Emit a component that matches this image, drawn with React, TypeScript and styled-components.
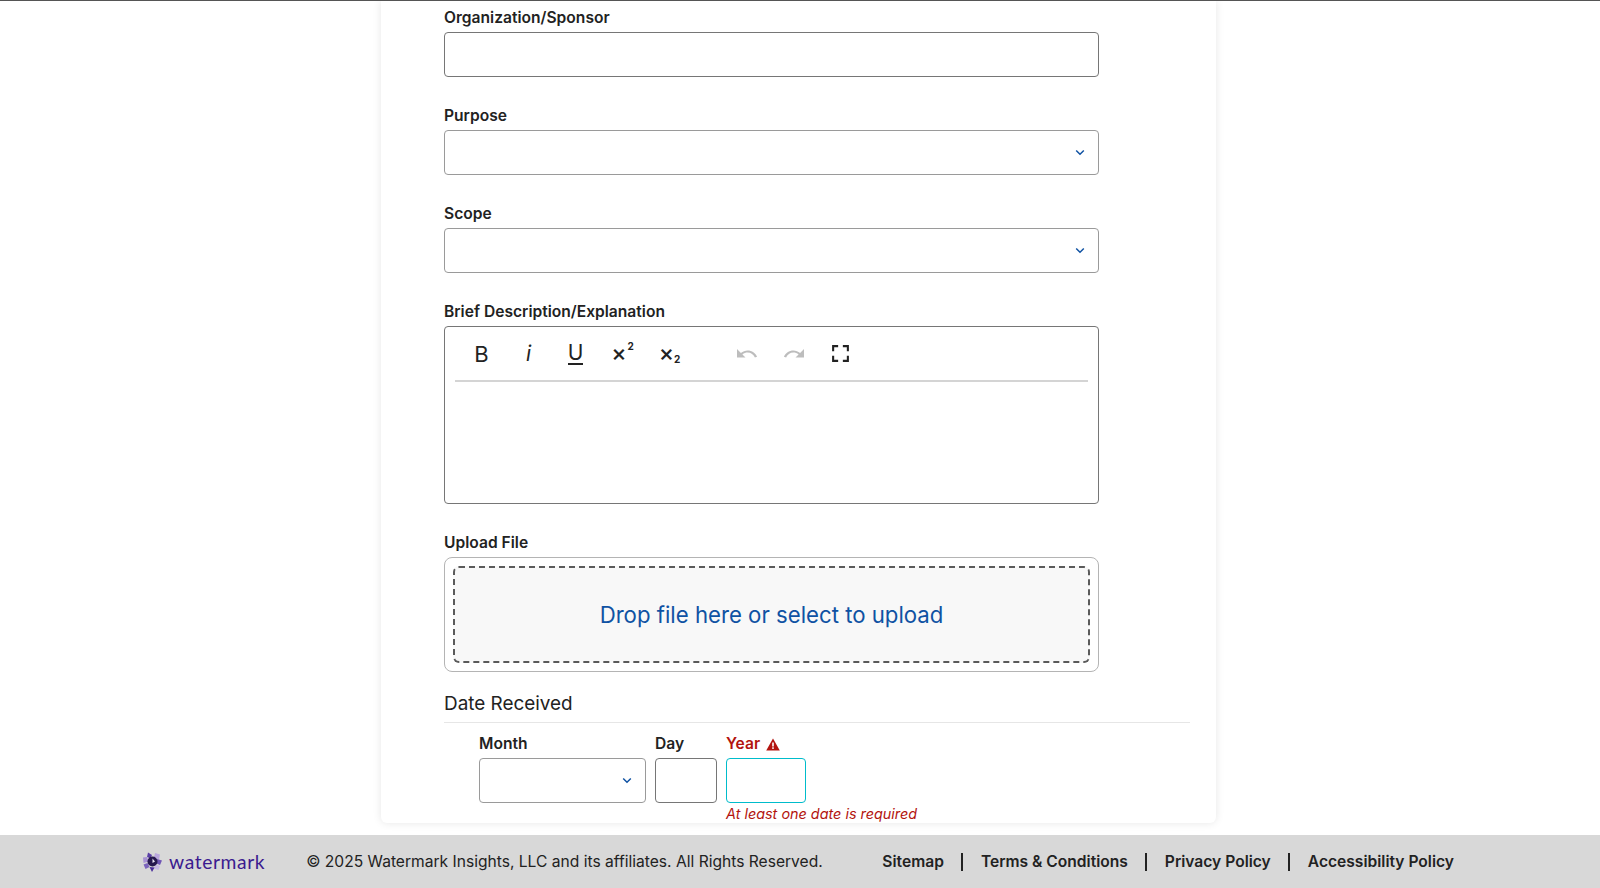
import { FC } from "react"
import styled, { createGlobalStyle } from "styled-components"

const GlobalStyle = createGlobalStyle`
  html, body {
    margin: 0;
    padding: 0;
    background: #fff;
    font-family: Inter, "Liberation Sans", sans-serif;
    color: #222;
  }
  * {
    box-sizing: border-box;
  }
`

const Page = styled.div`
  height: 888px;
  display: flex;
  flex-direction: column;
  overflow: hidden;
  border-top: 1px solid #555;
`

const Main = styled.main`
  flex: 1;
  min-height: 0;
  padding-left: 381px;
`

const Card = styled.div`
  width: 835px;
  height: 822px;
  padding: 5px 26px 0 63px;
  background: #fff;
  border-radius: 0 0 6px 6px;
  box-shadow: 0 0 8px rgba(0, 0, 0, 0.1);
`

const Field = styled.div`
  width: 655px;
  margin-bottom: 27px;
`

const Label = styled.label<{ $error?: boolean }>`
  display: flex;
  align-items: center;
  gap: 6px;
  height: 24px;
  margin-bottom: 2px;
  font-size: 15.6px;
  line-height: 24px;
  font-weight: 600;
  color: ${(props) => (props.$error ? "#b3140f" : "#222")};
`

const TextInput = styled.input<{ $width?: number; $focus?: boolean }>`
  display: block;
  width: ${(props) => (props.$width ? `${props.$width}px` : "100%")};
  height: 45px;
  background: #fff;
  border: 1px solid ${(props) => (props.$focus ? "#00bccb" : "#767676")};
  border-radius: 4px;
  outline: none;
`

const SelectBox = styled.div<{ $width?: number }>`
  display: flex;
  align-items: center;
  justify-content: flex-end;
  width: ${(props) => (props.$width ? `${props.$width}px` : "100%")};
  height: 45px;
  padding-right: 13px;
  background: #fff;
  border: 1px solid #9a9a9a;
  border-radius: 4px;
`

const Editor = styled.div`
  height: 178px;
  padding: 0 10px;
  border: 1px solid #767676;
  border-radius: 4px;
`

const Toolbar = styled.div`
  display: flex;
  align-items: center;
  height: 55px;
  padding-left: 3px;
  border-bottom: 2px solid #d4d4d4;
`

const ToolGroup = styled.div`
  display: flex;
  margin-right: 30px;
`

const ToolButton = styled.button`
  display: flex;
  align-items: center;
  justify-content: center;
  width: 47px;
  height: 40px;
  padding: 0;
  background: transparent;
  border: 0;
  font-family: Inter, "Liberation Sans", sans-serif;
  color: #222;
`

const BoldGlyph = styled.span`
  font-size: 22px;
  font-weight: 400;
`

const ItalicGlyph = styled.span`
  font-size: 21px;
  font-style: italic;
  font-weight: 400;
`

const UnderlineGlyph = styled.span`
  font-size: 21px;
  font-weight: 400;
  line-height: 21px;
  border-bottom: 2px solid #222;
`

const ScriptGlyph = styled.span`
  display: flex;
  margin-top: -2px;
  font-size: 23px;
  line-height: 24px;
  font-weight: 500;
`

const Sup = styled.span`
  margin: -3px 0 0 1px;
  font-size: 10px;
  line-height: 16px;
  font-weight: 700;
`

const Sub = styled.span`
  margin: 13px 0 0 0;
  font-size: 10px;
  line-height: 11px;
  font-weight: 700;
`

const UploadFrame = styled.div`
  height: 115px;
  padding: 8px;
  margin-bottom: 18px;
  border: 1px solid #b4b4b4;
  border-radius: 8px;
`

const DropZone = styled.div`
  display: flex;
  align-items: center;
  justify-content: center;
  height: 97px;
  background: #f8f8f8;
  border: 2px dashed #5a5a5a;
  border-radius: 6px;
  color: #0f52a3;
  font-size: 22.2px;
`

const SectionTitle = styled.h2`
  width: 746px;
  margin: 0;
  padding-bottom: 4px;
  font-size: 18.9px;
  line-height: 28px;
  font-weight: 400;
  color: #222;
  border-bottom: 1px solid #e6e6e6;
`

const DateRow = styled.div`
  display: flex;
  gap: 9px;
  margin-top: 9px;
  padding-left: 35px;
`

const DatePart = styled.div`
  position: relative;
`

const ErrorText = styled.div`
  margin-top: 2px;
  font-size: 14.4px;
  line-height: 18px;
  font-style: italic;
  color: #b3140f;
  white-space: nowrap;
`

const Footer = styled.footer`
  display: flex;
  align-items: center;
  height: 53px;
  padding: 0 146px 0 143px;
  background: #d8d8d8;
  font-size: 15.6px;
  color: #222;
`

const Logo = styled.div`
  display: flex;
  align-items: center;
  gap: 7px;
  margin-right: 41px;
`

const LogoWord = styled.span`
  font-family: Lato, sans-serif;
  font-size: 19.3px;
  letter-spacing: 0.6px;
  color: #3b1a8f;
`

const Copyright = styled.span`
  flex: 1;
`

const FooterLinks = styled.nav`
  display: flex;
  align-items: center;
`

const FooterLink = styled.a`
  font-weight: 600;
  color: #222;
  padding: 0 17.5px;
  line-height: 18px;
  border-left: 2px solid #222;

  &:first-child {
    border-left: 0;
  }
  &:last-child {
    padding-right: 0;
  }
`

const Chevron: FC = () => (
  <svg width="10" height="7" viewBox="0 0 10 7" fill="none">
    <path d="M1.2 1.5 5 5.2l3.8-3.7" stroke="#0f52a3" strokeWidth="1.5" />
  </svg>
)

const UndoIcon: FC<{ flip?: boolean }> = ({ flip }) => (
  <svg width="22" height="12" viewBox="0 0 22 12" style={flip ? { transform: "scaleX(-1)" } : undefined}>
    <path d="M1 1v8.5h8.5L6.4 6.4C8 5.2 9.8 4.6 11.6 4.6c3.3 0 6.1 2 7.3 5l2.2-.8C19.600 5 15.900 2.400 11.600 2.400 9.200 2.400 6.900 3.300 4.900 4.900z" fill="#bdbdbd" />
  </svg>
)

const FullscreenIcon: FC = () => (
  <svg width="17" height="17" viewBox="0 0 18 18" fill="none" stroke="#222" strokeWidth="2.2">
    <path d="M1.200 6.500V1.200h5.300M11.500 1.200h5.300v5.300M16.800 11.500v5.300h-5.300M6.500 16.800H1.200v-5.300" />
  </svg>
)

const WarningIcon: FC = () => (
  <svg width="14" height="13" viewBox="0 0 14 13">
    <path d="M7 .5 13.800 12.500H.2z" fill="#b3140f" />
    <rect x="6.200" y="4.500" width="1.600" height="4" fill="#fff" />
    <rect x="6.200" y="9.300" width="1.600" height="1.600" fill="#fff" />
  </svg>
)

const LogoMark: FC = () => (
  <svg width="19" height="20" viewBox="0 0 19 20">
    <path d="M5 0.500l4 2.500-1.500 3.500-3.500-1.500z" fill="#5a3fa6" />
    <path d="M12 1l5 1.500-1 5-5-2z" fill="#b9a6dd" />
    <path d="M0 5.500l4-.5 1.500 4.500L0.500 11z" fill="#a892d4" />
    <path d="M14 7l5 1.500L17 13l-3.500-1.500z" fill="#6f55b5" />
    <path d="M0.500 12.500l4-1.500 2 4-4 2z" fill="#7c64bd" />
    <path d="M13 12.500l4 1.500-1.500 4-5-1.500z" fill="#c7b8e4" />
    <path d="M6.500 15l5 .5-2.500 4.500z" fill="#4a2c9a" />
    <circle cx="9.500" cy="9.500" r="5" fill="#26184f" />
    <path d="M9.500 6.500l2.500 3-2.500 1.500z" fill="#e9e4f5" />
  </svg>
)

const App: FC = () => {
  return (
    <>
      <GlobalStyle />
      <Page>
        <Main>
          <Card>
            <Field>
              <Label>Organization/Sponsor</Label>
              <TextInput type="text" />
            </Field>
            <Field>
              <Label>Purpose</Label>
              <SelectBox>
                <Chevron />
              </SelectBox>
            </Field>
            <Field>
              <Label>Scope</Label>
              <SelectBox>
                <Chevron />
              </SelectBox>
            </Field>
            <Field>
              <Label>Brief Description/Explanation</Label>
              <Editor>
                <Toolbar>
                  <ToolGroup>
                    <ToolButton>
                      <BoldGlyph>B</BoldGlyph>
                    </ToolButton>
                    <ToolButton>
                      <ItalicGlyph>i</ItalicGlyph>
                    </ToolButton>
                    <ToolButton>
                      <UnderlineGlyph>U</UnderlineGlyph>
                    </ToolButton>
                    <ToolButton>
                      <ScriptGlyph>
                        ×<Sup>2</Sup>
                      </ScriptGlyph>
                    </ToolButton>
                    <ToolButton>
                      <ScriptGlyph>
                        ×<Sub>2</Sub>
                      </ScriptGlyph>
                    </ToolButton>
                  </ToolGroup>
                  <ToolButton>
                    <UndoIcon />
                  </ToolButton>
                  <ToolButton>
                    <UndoIcon flip />
                  </ToolButton>
                  <ToolButton>
                    <FullscreenIcon />
                  </ToolButton>
                </Toolbar>
              </Editor>
            </Field>
            <Field>
              <Label>Upload File</Label>
              <UploadFrame>
                <DropZone>Drop file here or select to upload</DropZone>
              </UploadFrame>
              <SectionTitle>Date Received</SectionTitle>
              <DateRow>
                <DatePart>
                  <Label>Month</Label>
                  <SelectBox $width={167}>
                    <Chevron />
                  </SelectBox>
                </DatePart>
                <DatePart>
                  <Label>Day</Label>
                  <TextInput type="text" $width={62} />
                </DatePart>
                <DatePart>
                  <Label $error>
                    Year <WarningIcon />
                  </Label>
                  <TextInput type="text" $width={80} $focus />
                  <ErrorText>At least one date is required</ErrorText>
                </DatePart>
              </DateRow>
            </Field>
          </Card>
        </Main>
        <Footer>
          <Logo>
            <LogoMark />
            <LogoWord>watermark</LogoWord>
          </Logo>
          <Copyright>© 2025 Watermark Insights, LLC and its affiliates. All Rights Reserved.</Copyright>
          <FooterLinks>
            <FooterLink>Sitemap</FooterLink>
            <FooterLink>Terms &amp; Conditions</FooterLink>
            <FooterLink>Privacy Policy</FooterLink>
            <FooterLink>Accessibility Policy</FooterLink>
          </FooterLinks>
        </Footer>
      </Page>
    </>
  )
}

export default App
